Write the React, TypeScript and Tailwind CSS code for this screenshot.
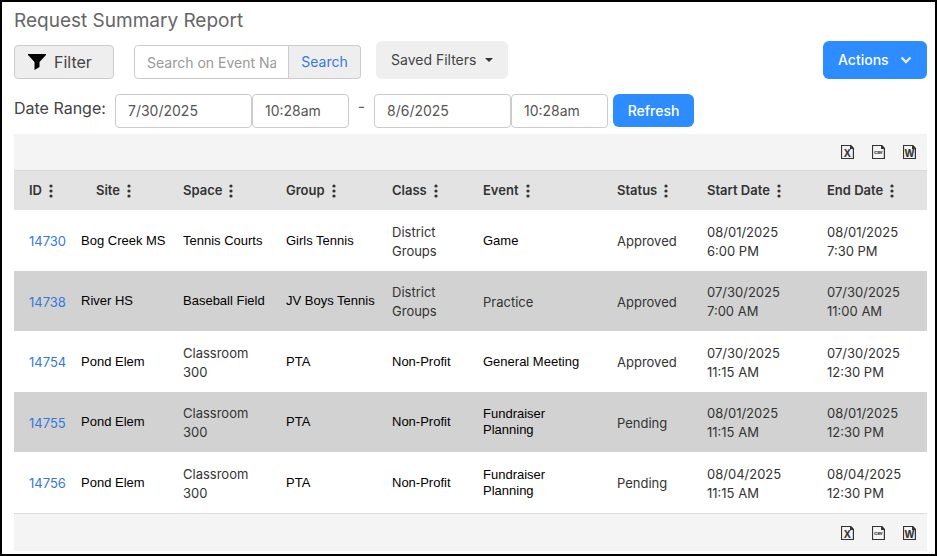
import React from "react";

type Tone = "base" | "plain";
type Cell = { text: string; tone?: Tone };
type Row = { id: string; cells: Cell[] };

const columns = [
  { name: "ID", width: "w-[52px]", pad: "pl-[15px]" },
  { name: "Site", width: "w-[102px]", pad: "pl-[30px]" },
  { name: "Space", width: "w-[103px]", pad: "pl-[15px]" },
  { name: "Group", width: "w-[106px]", pad: "pl-[15px]" },
  { name: "Class", width: "w-[91px]", pad: "pl-[15px]" },
  { name: "Event", width: "w-[134px]", pad: "pl-[15px]" },
  { name: "Status", width: "w-[90px]", pad: "pl-[15px]" },
  { name: "Start Date", width: "w-[120px]", pad: "pl-[15px]" },
  { name: "End Date", width: "w-[115px]", pad: "pl-[15px]" },
];

const plain = (text: string): Cell => ({ text, tone: "plain" });
const base = (text: string): Cell => ({ text, tone: "base" });

const rows: Row[] = [
  {
    id: "14730",
    cells: [plain("Bog Creek MS"), plain("Tennis Courts"), plain("Girls Tennis"), base("District\nGroups"), plain("Game"), base("Approved"), base("08/01/2025\n6:00 PM"), base("08/01/2025\n7:30 PM")],
  },
  {
    id: "14738",
    cells: [plain("River HS"), plain("Baseball Field"), plain("JV Boys Tennis"), base("District\nGroups"), base("Practice"), base("Approved"), base("07/30/2025\n7:00 AM"), base("07/30/2025\n11:00 AM")],
  },
  {
    id: "14754",
    cells: [plain("Pond Elem"), base("Classroom\n300"), plain("PTA"), plain("Non-Profit"), plain("General Meeting"), base("Approved"), base("07/30/2025\n11:15 AM"), base("07/30/2025\n12:30 PM")],
  },
  {
    id: "14755",
    cells: [plain("Pond Elem"), base("Classroom\n300"), plain("PTA"), plain("Non-Profit"), plain("Fundraiser\nPlanning"), base("Pending"), base("08/01/2025\n11:15 AM"), base("08/01/2025\n12:30 PM")],
  },
  {
    id: "14756",
    cells: [plain("Pond Elem"), base("Classroom\n300"), plain("PTA"), plain("Non-Profit"), plain("Fundraiser\nPlanning"), base("Pending"), base("08/04/2025\n11:15 AM"), base("08/04/2025\n12:30 PM")],
  },
];

function FileIcon({ label, size, y }: { label: string; size: number; y: number }) {
  return (
    <svg width="13" height="14" viewBox="0 0 13 14" aria-hidden="true">
      <path d="M0.5 0.5H9.5L12.4 3.5V13.5H0.5Z" fill="none" stroke="#333" strokeWidth="1.2" />
      <path d="M9 0H10L13 3.2V4H9Z" fill="#333" />
      <text x="6.4" y={y} textAnchor="middle" fontSize={size} fontWeight="700" fill="#333" stroke="#333" strokeWidth="0.2" fontFamily="'Liberation Sans', Arial, sans-serif">
        {label}
      </text>
    </svg>
  );
}

function ExportButtons() {
  return (
    <div className="flex h-9 items-center justify-end gap-[18px] pr-[11px]">
      <button type="button" aria-label="Export to Excel"><FileIcon label="X" size={10} y={12} /></button>
      <button type="button" aria-label="Export to CSV"><FileIcon label="CSV" size={4} y={9} /></button>
      <button type="button" aria-label="Export to Word"><FileIcon label="W" size={10} y={12} /></button>
    </div>
  );
}

function ColumnMenu({ name }: { name: string }) {
  return (
    <button type="button" aria-label={`${name} column menu`} className="ml-[7px]">
      <svg width="4" height="14" viewBox="0 0 4 14" fill="#333" aria-hidden="true">
        <circle cx="2" cy="2" r="1.6" />
        <circle cx="2" cy="7" r="1.6" />
        <circle cx="2" cy="12" r="1.6" />
      </svg>
    </button>
  );
}

const field = "h-[34px] rounded border border-[#ccc] bg-white px-3 pb-0.5 text-sm text-[#555] outline-none";

export default function App() {
  return (
    <main className="min-h-screen border-2 border-black bg-white pr-2 pb-[3px] pl-3 font-['Inter','Liberation_Sans',sans-serif] text-[#333]">
      <h1 className="pt-[5px] text-[19px] leading-7 text-[#666]">Request Summary Report</h1>

      <div className="mt-[6px] flex items-end">
        <button type="button" className="flex h-[34px] w-[100px] items-center rounded border border-[#ccc] bg-[#eee] pl-[13px] text-base text-[#444]">
          <svg width="18" height="16" viewBox="0 0 18 16" className="mr-2" aria-hidden="true">
            <path d="M0 0H18V1L11.5 8V13L6.5 16V8L0 1Z" fill="#000" />
          </svg>
          Filter
        </button>

        <form className="ml-5 flex" onSubmit={(e) => e.preventDefault()}>
          <input
            type="text"
            aria-label="Search on Event Name"
            placeholder="Search on Event Name"
            className="h-[34px] w-[155px] rounded-l border border-[#ccc] bg-white px-3 text-sm outline-none placeholder:text-[#999]"
          />
          <button type="submit" className="h-[34px] w-[72px] rounded-r border border-l-0 border-[#ccc] bg-[#eee] text-sm text-[#3579dc]">
            Search
          </button>
        </form>

        <button type="button" className="ml-[15px] flex h-[38px] w-[132px] items-center rounded-md bg-[#efefef] pl-[15px] text-sm text-[#444]">
          Saved Filters
          <svg width="8" height="4" viewBox="0 0 8 4" className="ml-[9px]" aria-hidden="true">
            <path d="M0 0H8L4 4Z" fill="#333" />
          </svg>
        </button>

        <button type="button" className="ml-auto flex h-[38px] w-[104px] items-center rounded-md bg-[#2d8cff] pl-[15px] text-sm font-medium text-white">
          Actions
          <svg width="12" height="8" viewBox="0 0 12 8" className="ml-[11px]" aria-hidden="true">
            <path d="M1.5 1.5L6 6L10.5 1.5" fill="none" stroke="#e8e8e8" strokeWidth="2.4" />
          </svg>
        </button>
      </div>

      <div className="mt-[15px] flex items-start">
        <label htmlFor="start-date" className="w-[101px] text-base leading-7 text-[#444]">Date Range:</label>
        <input id="start-date" type="text" defaultValue="7/30/2025" className={`${field} w-[137px]`} />
        <input type="text" aria-label="Start time" defaultValue="10:28am" className={`${field} w-[97px]`} />
        <span className="w-[25px] text-center text-base leading-6 text-[#666]">-</span>
        <input type="text" aria-label="End date" defaultValue="8/6/2025" className={`${field} w-[137px]`} />
        <input type="text" aria-label="End time" defaultValue="10:28am" className={`${field} w-[97px]`} />
        <button type="button" className="ml-[5px] h-[33px] w-[81px] rounded-md bg-[#2d8cff] text-sm font-medium text-white">Refresh</button>
      </div>

      <section className="mt-[6px] bg-[#f4f4f4]">
        <ExportButtons />
        <table className="w-full table-fixed border-collapse text-[13px]">
          <thead>
            <tr className="h-10 bg-[#e3e3e3] shadow-[inset_0_1px_0_#d8d8d8]">
              {columns.map((c) => (
                <th key={c.name} scope="col" className={`${c.width} ${c.pad} pt-0.5 pr-0 pb-0 text-left font-semibold whitespace-nowrap`}>
                  <span className="flex items-center">
                    {c.name}
                    <ColumnMenu name={c.name} />
                  </span>
                </th>
              ))}
            </tr>
          </thead>
          <tbody>
            {rows.map((row) => (
              <tr key={row.id} className="h-[61px] bg-white even:h-[60px] even:bg-[#d2d2d2]">
                <td className="pt-0.5 pr-0 pb-0 pl-[15px] leading-[19px]"><a href={`#${row.id}`} className="text-[#3579dc]">{row.id}</a></td>
                {row.cells.map((cell, i) => (
                  <td
                    key={i}
                    className={
                      cell.tone === "plain"
                        ? "p-0 pl-[15px] font-['Liberation_Sans',Arial,sans-serif] leading-4 whitespace-pre text-black"
                        : "pt-0.5 pr-0 pb-0 pl-[15px] leading-[19px] whitespace-pre"
                    }
                  >
                    {cell.text}
                  </td>
                ))}
              </tr>
            ))}
          </tbody>
        </table>
        <div className="border-t border-[#ddd] pt-px">
          <ExportButtons />
        </div>
      </section>
    </main>
  );
}
